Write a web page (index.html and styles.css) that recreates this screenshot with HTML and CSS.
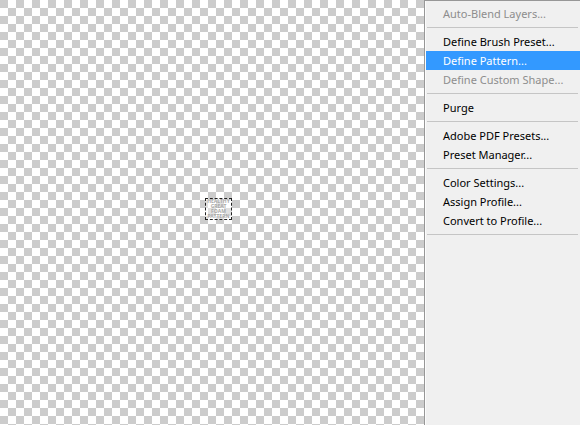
FILE: index.html
```html
<!DOCTYPE html>
<html lang="en">
<head>
    <meta charset="UTF-8">
    <title>Edit Menu</title>
    <link rel="stylesheet" href="styles.css">
</head>
<body>

<div class="workspace">
    <div class="canvas">
        <div class="selection">
            <span>HEALTHY</span>
            <span>GREAT</span>
            <span>FOAM</span>
            <span>PATTERN</span>
        </div>
    </div>

    <ul class="menu">
        <li class="item disabled">Auto-Blend Layers...</li>
        <li class="sep"></li>
        <li class="item">Define Brush Preset...</li>
        <li class="item active">Define Pattern...</li>
        <li class="item disabled">Define Custom Shape...</li>
        <li class="sep"></li>
        <li class="item">Purge</li>
        <li class="sep"></li>
        <li class="item">Adobe PDF Presets...</li>
        <li class="item">Preset Manager...</li>
        <li class="sep"></li>
        <li class="item">Color Settings...</li>
        <li class="item">Assign Profile...</li>
        <li class="item">Convert to Profile...</li>
        <li class="sep"></li>
    </ul>
</div>

</body>
</html>
```

FILE: styles.css
```css
body {
    margin: 0;
    font-family: "Noto Sans", Arial, sans-serif;
    overflow: hidden;
}

.workspace {
    display: flex;
    width: 580px;
    height: 425px;
}

.canvas {
    position: relative;
    flex: 1;
    background-color: #fff;
    background-image: conic-gradient(#fff 25%, #cccccc 25% 50%, #fff 50% 75%, #cccccc 75%);
    background-size: 16px 16px;
}

.selection {
    position: absolute;
    left: 205px;
    top: 198px;
    width: 25px;
    height: 20px;
    border: 1px dashed #222;
    display: flex;
    flex-direction: column;
    align-items: center;
    justify-content: center;
    font-size: 5px;
    font-weight: bold;
    line-height: 5px;
    color: #a8a8a8;
    background: rgba(255, 255, 255, 0.4);
}

.menu {
    list-style: none;
    margin: 0;
    padding: 3px 0 0 0;
    width: 155px;
    height: 421px;
    background-color: #f0f0f0;
    border: 1px solid #979797;
    border-right: none;
    box-shadow: inset 1px 0 0 #fcfcfc;
}

.item {
    height: 19px;
    line-height: 19px;
    padding-left: 17px;
    margin-left: 1px;
    font-size: 11px;
    color: #000;
    white-space: nowrap;
}

.item.disabled {
    color: #8d8d8d;
}

.item.active {
    background-color: #3399ff;
    color: #fff;
}

.sep {
    height: 1px;
    margin: 4px 2px 4px 2px;
    background-color: #c5c5c5;
}
```
